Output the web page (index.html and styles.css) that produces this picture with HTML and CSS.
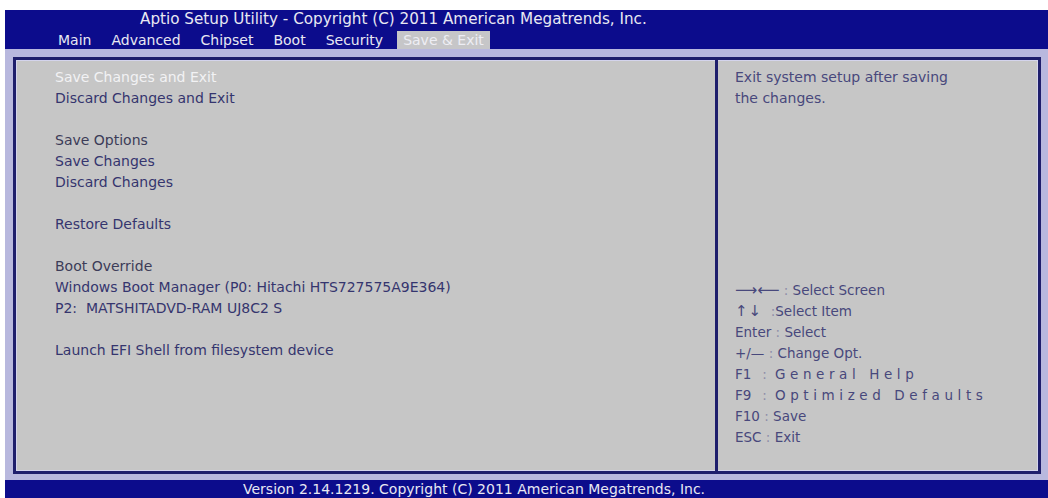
FILE: index.html
```html
<!DOCTYPE html>
<html lang="en">
<head>
    <meta charset="UTF-8">
    <title>Aptio Setup Utility - Save &amp; Exit</title>
    <link rel="stylesheet" href="styles.css">
</head>
<body>
    <div class="screen">
        <header class="topbar">
            <div class="title">Aptio Setup Utility - Copyright (C) 2011 American Megatrends, Inc.</div>
            <nav class="tabs">
                <span class="tab">Main</span>
                <span class="tab">Advanced</span>
                <span class="tab">Chipset</span>
                <span class="tab">Boot</span>
                <span class="tab">Security</span>
                <span class="tab active">Save &amp; Exit</span>
            </nav>
        </header>

        <div class="band">
            <div class="frame">
                <div class="menu">
                    <div class="item selected">Save Changes and Exit</div>
                    <div class="item">Discard Changes and Exit</div>
                    <div class="gap"></div>
                    <div class="item label">Save Options</div>
                    <div class="item">Save Changes</div>
                    <div class="item">Discard Changes</div>
                    <div class="gap"></div>
                    <div class="item">Restore Defaults</div>
                    <div class="gap"></div>
                    <div class="item label">Boot Override</div>
                    <div class="item">Windows Boot Manager (P0: Hitachi HTS727575A9E364)</div>
                    <div class="item">P2:&nbsp; MATSHITADVD-RAM UJ8C2 S</div>
                    <div class="gap"></div>
                    <div class="item">Launch EFI Shell from filesystem device</div>
                </div>

                <div class="help">
                    <div class="desc">
                        Exit system setup after saving<br>
                        the changes.
                    </div>
                    <div class="keys">
                        <div><span class="key arrows">&#x27F6;&#x27F5;</span> <span class="sep">:</span> Select Screen</div>
                        <div><span class="key updown">&uarr;&darr;</span> &nbsp;<span class="sep">:</span>Select Item</div>
                        <div><span class="key">Enter</span> <span class="sep">:</span> Select</div>
                        <div><span class="key">+/&mdash;</span> <span class="sep">:</span> Change Opt.</div>
                        <div class="spaced"><span class="key">F1</span><span class="sep">:</span><span class="wide">General Help</span></div>
                        <div class="spaced"><span class="key">F9</span><span class="sep">:</span><span class="wide">Optimized Defaults</span></div>
                        <div><span class="key">F10</span> <span class="sep">:</span> Save</div>
                        <div><span class="key">ESC</span> <span class="sep">:</span> Exit</div>
                    </div>
                </div>
            </div>
        </div>

        <footer class="bottombar">Version 2.14.1219. Copyright (C) 2011 American Megatrends, Inc.</footer>
    </div>
</body>
</html>
```

FILE: styles.css
```css
body {
    margin: 0;
    background: #ffffff;
    font-family: "DejaVu Sans", sans-serif;
    font-size: 14px;
}
.screen {
    margin: 10px 0 0 5px;
    width: 1043px;
    height: 488px;
    display: flex;
    flex-direction: column;
}

/* top blue bar */
.topbar {
    background: #0c0c8c;
    color: #e8e8f2;
    height: 39px;
}
.title {
    height: 21px;
    line-height: 19px;
    padding-left: 135px;
    font-size: 15.2px;
}
.tabs {
    display: flex;
    gap: 8px;
    padding-left: 47px;
    height: 18px;
}
.tab {
    padding: 0 6px;
    line-height: 18px;
}
.tab.active {
    background: #c6c6c8;
    color: #eeeef4;
}

/* lavender band with framed panels */
.band {
    flex: 1;
    background: #b8b8de;
    padding: 8px 7px 6px 8px;
    display: flex;
}
.frame {
    flex: 1;
    display: flex;
    border: 3px solid #1e1e6c;
    background: #c6c6c6;
    box-shadow: inset 0 0 0 1px #d4d4ec;
}
.menu {
    width: 660px;
    padding: 7px 0 0 39px;
    border-right: 3px solid #1e1e6c;
    line-height: 21px;
    color: #35356e;
}
.item.selected { color: #f2f2f4; }
.item.label { color: #3c3c58; }
.gap { height: 21px; }

.help {
    flex: 1;
    display: flex;
    flex-direction: column;
    padding: 7px 0 23px 17px;
    line-height: 21px;
    color: #48487c;
}
.keys {
    margin-top: auto;
    font-size: 13.5px;
}
.keys .arrows { font-size: 15.5px; }
.keys .updown { font-size: 15px; letter-spacing: 1px; }
.keys .sep { color: #8e8ea8; }
.keys .spaced .sep { margin: 0 8px 0 11px; }
.keys .wide { letter-spacing: 4.6px; }

/* bottom blue bar */
.bottombar {
    background: #0c0c8c;
    color: #e8e8f2;
    height: 18px;
    line-height: 18px;
    padding-left: 238px;
}
```
